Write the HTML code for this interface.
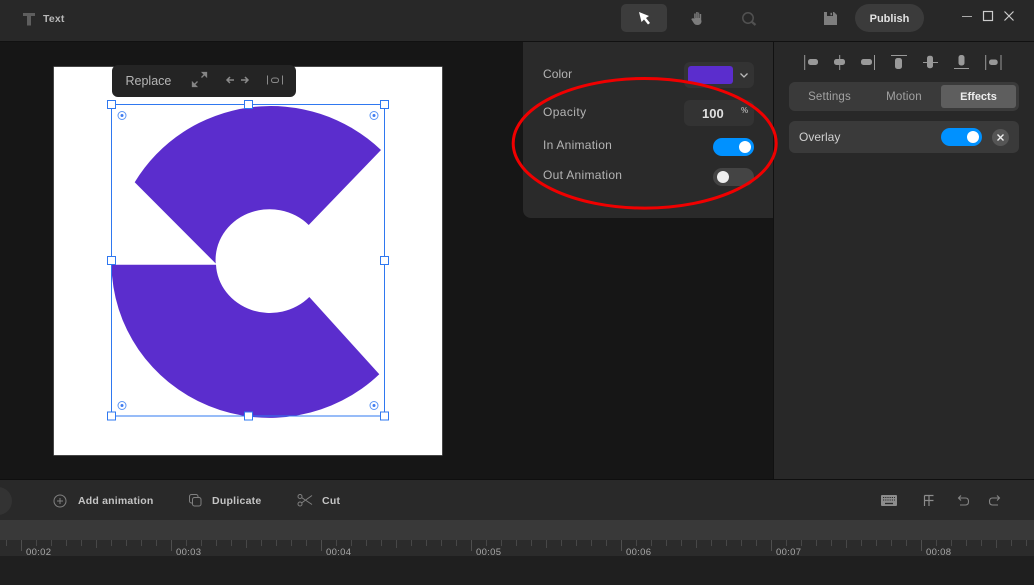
<!DOCTYPE html>
<html>
<head>
<meta charset="utf-8">
<style>
html,body{margin:0;padding:0;width:1034px;height:585px;overflow:hidden;background:#161616;font-family:"Liberation Sans",sans-serif}
.a{position:absolute}
.t{position:absolute;white-space:nowrap;line-height:16px}
.toggle{position:absolute;width:41px;height:18px;border-radius:9px}
.knob{position:absolute;width:12px;height:12px;border-radius:50%;top:3px}
.time{position:absolute;top:547px;font-size:9.5px;line-height:12px;color:#a8a8a8;letter-spacing:.3px}
</style>
</head>
<body>
<div class="a" style="left:0;top:0;width:1034px;height:41px;background:#282828"></div>
<div class="a" style="left:0;top:41px;width:1034px;height:1px;background:#111"></div>
<div class="a" style="left:0;top:42px;width:774px;height:438px;background:#161616"></div>
<div class="a" style="left:773px;top:42px;width:261px;height:438px;background:#282828;border-left:1px solid #111;box-sizing:border-box"></div>

<!-- top left -->
<svg class="a" style="left:22px;top:12px" width="14" height="14"><path d="M1 1h12v3H9v9.500H5V4H1z" fill="#5e5e5e"/></svg>
<div class="t" style="left:43px;top:11px;font-size:10.500px;font-weight:bold;color:#b8b8b8;letter-spacing:.2px">Text</div>

<!-- top tools -->
<div class="a" style="left:621px;top:4px;width:46px;height:28px;border-radius:5px;background:#3c3c3c"></div>
<svg class="a" style="left:638px;top:11px" width="14" height="14"><path d="M1 1l10 4-3 2 4 5-2 1.500-4-5-2.500 2.500z" fill="#fff"/></svg>
<svg class="a" style="left:689px;top:10px" width="16" height="16"><path d="M1 9l2-1 1 1V3.500h1.500V8h.5V2h1.500v6h.5V2.500H9V8h.5V4H11v6c1 2-.5 5-3.500 5-2 0-3-.500-4-2z" fill="#7c7c7c" transform="translate(1.200 0)"/></svg>
<svg class="a" style="left:741px;top:11px" width="16" height="16"><circle cx="7" cy="7" r="5.200" fill="none" stroke="#515151" stroke-width="1.500"/><path d="M11 11l3.500 3" stroke="#515151" stroke-width="2.200"/></svg>
<svg class="a" style="left:824px;top:12px" width="13" height="13"><path d="M0 0h10l3 3v10H0z" fill="#7e7e7e"/><rect x="3" y="0" width="6" height="4" fill="#282828"/><rect x="6.500" y=".8" width="1.500" height="2.400" fill="#7e7e7e"/></svg>
<div class="a" style="left:855px;top:4px;width:69px;height:28px;border-radius:14px;background:#3b3b3b"></div>
<div class="t" style="left:855px;top:10px;width:69px;text-align:center;font-size:11px;font-weight:bold;color:#e2e2e2;padding-top:1px">Publish</div>
<svg class="a" style="left:960px;top:9px" width="60" height="16"><path d="M2 7.500h10" stroke="#aaa" stroke-width="1"/><rect x="23.500" y="2.500" width="9" height="9" fill="none" stroke="#ccc" stroke-width="1.200"/><path d="M44.500 2.500l9 9M53.500 2.500l-9 9" stroke="#ccc" stroke-width="1.200"/></svg>

<!-- canvas -->
<div class="a" style="left:54px;top:67px;width:388px;height:388px;background:#fff;box-shadow:0 0 0 .5px #777"></div>
<svg class="a" style="left:0;top:0" width="1034" height="585">
<path d="M381 150A158 155 0 0 0 134.700 182.300L215.700 263.500A54 50.700 0 0 1 308.700 225Z" fill="#5b2dcd"/>
<path d="M111.500 264.700L216 264.700A54 50.700 0 0 0 309.300 297L379.300 374.300A158 155 0 0 1 111.500 264.700Z" fill="#5b2dcd"/>
<rect x="111.500" y="104.500" width="273" height="311.500" fill="none" stroke="#2f78f0" stroke-width="1"/>
<g fill="#fff" stroke="#2f78f0" stroke-width="1">
<rect x="107.500" y="100.500" width="8" height="8"/><rect x="244.500" y="100.500" width="8" height="8"/><rect x="380.500" y="100.500" width="8" height="8"/>
<rect x="107.500" y="256.500" width="8" height="8"/><rect x="380.500" y="256.500" width="8" height="8"/>
<rect x="107.500" y="412" width="8" height="8"/><rect x="244.500" y="412" width="8" height="8"/><rect x="380.500" y="412" width="8" height="8"/>
</g>
<g fill="none" stroke="#5b95f5" stroke-width="1"><circle cx="122" cy="115.500" r="4"/><circle cx="374" cy="115.500" r="4"/><circle cx="122" cy="405.500" r="4"/><circle cx="374" cy="405.500" r="4"/></g>
<g fill="#3f7cf0"><circle cx="122" cy="115.500" r="1.500"/><circle cx="374" cy="115.500" r="1.500"/><circle cx="122" cy="405.500" r="1.500"/><circle cx="374" cy="405.500" r="1.500"/></g>
</svg>

<!-- replace toolbar -->
<div class="a" style="left:112px;top:65px;width:184px;height:32px;border-radius:6px;background:#242424"></div>
<div class="t" style="left:125.500px;top:73px;font-size:12.500px;color:#b5b5b5">Replace</div>
<svg class="a" style="left:190px;top:70px" width="100" height="20">
<path d="M2.500 16.500l5-5M2.500 16.500v-4l4 4zM16.500 2.500l-5 5M16.500 2.500v4l-4-4z" stroke="#858585" stroke-width="1.300" fill="#858585"/>
<path d="M37 10h7M40 7l-3 3 3 3M58 10h-7M55 7l3 3-3 3" stroke="#8a8a8a" stroke-width="1.500" fill="none"/>
<path d="M77.500 5.500v9M92.500 5.500v9" stroke="#8a8a8a" stroke-width="1"/>
<rect x="81.500" y="8" width="7" height="4.500" rx="2.200" fill="none" stroke="#8a8a8a" stroke-width="1"/>
</svg>

<!-- float panel -->
<div class="a" style="left:523px;top:42px;width:250px;height:176px;background:#2a2a2a;border-bottom-left-radius:8px"></div>
<div class="t" style="left:543px;top:66px;font-size:12px;color:#b4b4b4;letter-spacing:.1px">Color</div>
<div class="a" style="left:684px;top:62px;width:70px;height:26px;border-radius:6px;background:#333"></div>
<div class="a" style="left:688px;top:66px;width:45px;height:18px;border-radius:3px;background:#5b2dcd"></div>
<svg class="a" style="left:739px;top:72px" width="10" height="8"><path d="M1.500 1.500L5 5l3.500-3.500" fill="none" stroke="#bbb" stroke-width="1.300"/></svg>
<div class="t" style="left:543px;top:104px;font-size:12px;color:#b4b4b4;letter-spacing:.4px">Opacity</div>
<div class="a" style="left:684px;top:100px;width:70px;height:26px;border-radius:6px;background:#333"></div>
<div class="t" style="left:702px;top:106px;font-size:13px;font-weight:bold;color:#e0e0e0">100</div>
<div class="t" style="left:741px;top:103px;font-size:8px;font-weight:bold;color:#aaa">%</div>
<div class="t" style="left:543px;top:137px;font-size:12px;color:#b4b4b4;letter-spacing:.25px">In Animation</div>
<div class="toggle" style="left:713px;top:138px;background:#0091ff"><div class="knob" style="left:26px;background:#fff"></div></div>
<div class="t" style="left:543px;top:167px;font-size:12px;color:#b4b4b4;letter-spacing:.3px">Out Animation</div>
<div class="toggle" style="left:713px;top:168px;background:#444"><div class="knob" style="left:4px;background:#eee"></div></div>

<!-- red ellipse -->
<svg class="a" style="left:0;top:0" width="1034" height="585"><ellipse cx="644.700" cy="143.300" rx="131.500" ry="64.800" fill="none" stroke="#f00000" stroke-width="3"/></svg>

<!-- right panel -->
<svg class="a" style="left:800px;top:52px" width="210" height="22">
<g stroke="#999" stroke-width="1" fill="#999">
<path d="M4.700 3v15" fill="none"/><rect x="8" y="7" width="10" height="6" rx="2.500" stroke="none"/>
<path d="M39.700 3v15" fill="none"/><rect x="34" y="7" width="11" height="6" rx="2.500" stroke="none"/>
<path d="M74.500 3v15" fill="none"/><rect x="61" y="7" width="11" height="6" rx="2.500" stroke="none"/>
<path d="M91 3.500h16" fill="none"/><rect x="95" y="6" width="7" height="11" rx="2.500" stroke="none"/>
<path d="M123 10.500h15" fill="none"/><rect x="127" y="3.700" width="6" height="12.500" rx="2.500" stroke="none"/>
<path d="M154 16.500h15" fill="none"/><rect x="158.500" y="3" width="6" height="10.500" rx="2.500" stroke="none"/>
<path d="M185.700 3v15M201 3v15" fill="none"/><rect x="189" y="7.500" width="8.700" height="5.500" rx="2.500" stroke="none"/>
</g></svg>
<div class="a" style="left:789px;top:82px;width:230px;height:29px;border-radius:6px;background:#3a3a3a"></div>
<div class="a" style="left:941px;top:85px;width:75px;height:23px;border-radius:3px;background:#5e5e5e"></div>
<div class="t" style="left:789px;top:89px;width:81px;text-align:center;font-size:11.500px;color:#a2a2a2;letter-spacing:.15px">Settings</div>
<div class="t" style="left:864px;top:89px;width:80px;text-align:center;font-size:11.500px;color:#a2a2a2;letter-spacing:.2px">Motion</div>
<div class="t" style="left:941px;top:89px;width:75px;text-align:center;font-size:11px;font-weight:bold;color:#eee">Effects</div>
<div class="a" style="left:789px;top:121px;width:230px;height:32px;border-radius:6px;background:#3a3a3a"></div>
<div class="t" style="left:799px;top:129px;font-size:12px;color:#d0d0d0">Overlay</div>
<div class="toggle" style="left:941px;top:128px;background:#0091ff"><div class="knob" style="left:26px;background:#fff"></div></div>
<div class="a" style="left:992px;top:129px;width:17px;height:17px;border-radius:50%;background:#555"></div>
<svg class="a" style="left:992px;top:129px" width="17" height="17"><path d="M5.500 5.500l6 6M11.500 5.500l-6 6" stroke="#eee" stroke-width="1.400"/></svg>

<!-- bottom -->
<div class="a" style="left:0;top:479px;width:1034px;height:1px;background:#0f0f0f"></div>
<div class="a" style="left:0;top:480px;width:1034px;height:40px;background:#292929"></div>
<div class="a" style="left:-28px;top:487px;width:40px;height:28px;border-radius:14px;background:#333"></div>
<svg class="a" style="left:52px;top:493px" width="16" height="16"><circle cx="8" cy="8" r="6" fill="none" stroke="#808080" stroke-width="1"/><path d="M8 5v6M5 8h6" stroke="#808080" stroke-width="1"/></svg>
<div class="t" style="left:78px;top:493px;font-size:10.500px;font-weight:bold;color:#c4c4c4;letter-spacing:.2px">Add animation</div>
<svg class="a" style="left:188px;top:493px" width="15" height="15"><rect x="1.500" y="1.500" width="8.500" height="8.500" rx="2" fill="none" stroke="#808080"/><rect x="4.500" y="4.500" width="8.500" height="8.500" rx="2" fill="#292929" stroke="#808080"/></svg>
<div class="t" style="left:212px;top:493px;font-size:10.500px;font-weight:bold;color:#c4c4c4;letter-spacing:.25px">Duplicate</div>
<svg class="a" style="left:297px;top:493px" width="16" height="15"><circle cx="3" cy="3.500" r="2" fill="none" stroke="#808080"/><circle cx="3" cy="11" r="2" fill="none" stroke="#808080"/><path d="M4.500 4.500L15 11.500M4.500 10L15 2.500" stroke="#808080"/></svg>
<div class="t" style="left:322px;top:493px;font-size:10.500px;font-weight:bold;color:#c4c4c4;letter-spacing:.25px">Cut</div>
<svg class="a" style="left:880px;top:494px" width="130" height="14">
<rect x="1" y="1" width="16" height="11" rx="1" fill="#8c8c8c"/>
<path d="M3 3.500h12M3 6h12" stroke="#292929" stroke-width="1" stroke-dasharray="1.200 1"/><path d="M5 9.500h8" stroke="#292929" stroke-width="1.300"/>
<path d="M44.500 1.500h9M44.500 12V1.500M44.500 6.500h9M49 1.500V12" fill="none" stroke="#8c8c8c" stroke-width="1.200"/>
<path d="M81 1.500L78.500 4 81 6.500M79 4h6.500c2 0 3 1.500 3 3.500s-1 3.500-3 3.500H80" fill="none" stroke="#858585" stroke-width="1.100"/>
<path d="M117 1.500L119.500 4 117 6.500M119 4h-6.500c-2 0-3 1.500-3 3.500s1 3.500 3 3.500h5.500" fill="none" stroke="#858585" stroke-width="1.100"/>
</svg>

<div class="a" style="left:0;top:520px;width:1034px;height:20px;background:#393939"></div>
<div class="a" style="left:0;top:540px;width:1034px;height:16px;background:#2b2b2b"></div>
<div class="a" style="left:0;top:556px;width:1034px;height:29px;background:#1f1f1f"></div>
<div class="a" style="left:0;top:540px;width:1034px;height:6px;background:repeating-linear-gradient(90deg,transparent 0,transparent 6px,#474747 6px,#474747 7px,transparent 7px,transparent 15px)"></div>
<div class="a" style="left:0;top:540px;width:1034px;height:8px;background:repeating-linear-gradient(90deg,transparent 0,transparent 21px,#474747 21px,#474747 22px,transparent 22px,transparent 75px)"></div>
<div class="a" style="left:0;top:540px;width:1034px;height:11px;background:repeating-linear-gradient(90deg,transparent 0,transparent 21px,#4f4f4f 21px,#4f4f4f 22px,transparent 22px,transparent 150px)"></div>
<div class="time" style="left:26px">00:02</div>
<div class="time" style="left:176px">00:03</div>
<div class="time" style="left:326px">00:04</div>
<div class="time" style="left:476px">00:05</div>
<div class="time" style="left:626px">00:06</div>
<div class="time" style="left:776px">00:07</div>
<div class="time" style="left:926px">00:08</div>
</body>
</html>
